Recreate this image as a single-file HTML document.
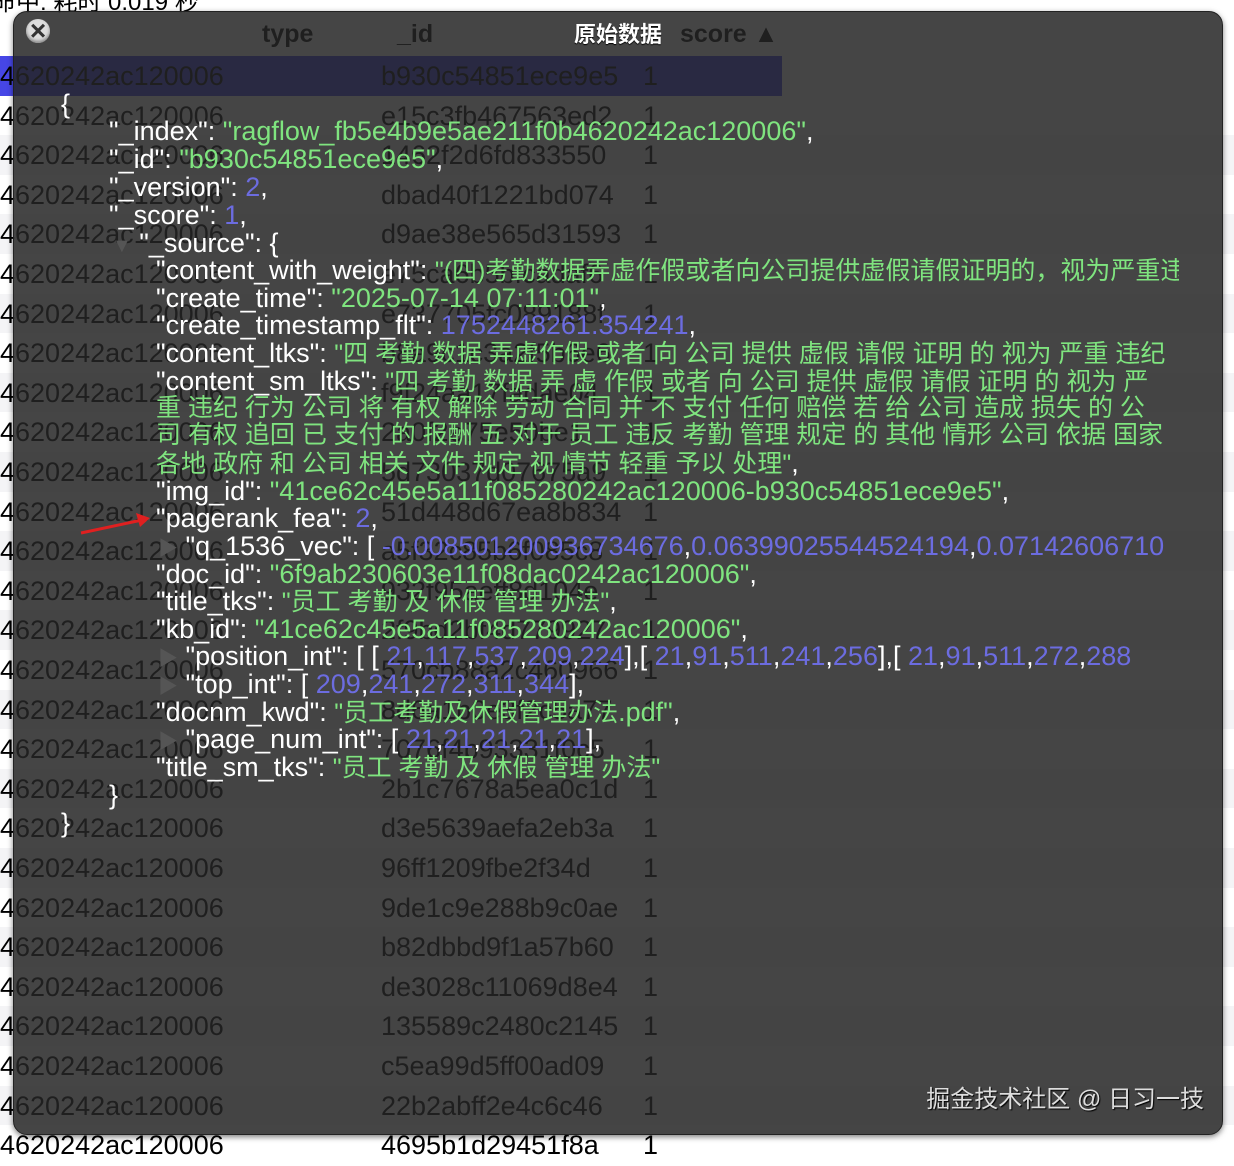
<!DOCTYPE html>
<html><head><meta charset="utf-8">
<style>
html,body{margin:0;padding:0;width:1234px;height:1142px;overflow:hidden;background:#fff;font-family:"Liberation Sans","Noto Sans CJK SC",sans-serif;}
.tb{position:absolute;left:0;top:0;width:1234px;height:1142px;}
.row{position:absolute;left:0;width:1234px;height:39.6px;font-size:27px;line-height:41px;color:#000;}
.row:nth-child(even){background:#f4f4f6}
.row span{position:absolute;top:0;white-space:nowrap}
.sel{background:#4646e6 !important}
.hdr{position:absolute;top:20px;font-size:25px;font-weight:bold;color:#000}
.ov{position:absolute;left:13px;top:11px;width:1208px;height:1122px;border-radius:14px;background:rgba(36,36,36,0.85);box-shadow:0 2px 6px rgba(0,0,0,.5);border:1px solid #222;overflow:hidden}
.title{position:absolute;left:0;width:100%;top:5px;text-align:center;color:#fff;font-weight:bold;font-size:22px;text-shadow:0 1px 1px #000}
.close{position:absolute;left:12px;top:7px;width:24px;height:24px;border-radius:50%;background:#ddd;box-shadow:inset 0 -2px 3px #888}
.close:before{content:"×";position:absolute;left:0;width:24px;top:-4px;text-align:center;font-size:28px;font-weight:bold;color:#333}
.j{position:absolute;white-space:nowrap;font-size:27px;line-height:28px;color:#fff;}
.c{font-size:25px}
.g{color:#7fe47f}.n{color:#6c6ce0}
.tri{color:#555;font-size:20px}
.clip{position:absolute;left:0;top:0;width:1165px;height:1122px;overflow:hidden}
.wm{position:absolute;right:18px;bottom:20px;color:#ddd;font-size:24px;text-shadow:1px 1px 1px #000}
</style></head><body>
<div style="position:absolute;left:-8px;top:-18px;font-size:24px;color:#000">命中: 耗时 0.019 秒</div>
<div class="tb">
<div class="hdr" style="left:262px">type</div>
<div class="hdr" style="left:397px">_id</div>
<div class="hdr" style="left:680px">score ▲</div>
<div class="row sel" style="top:56px;width:782px"><span style="left:0">4620242ac120006</span><span style="left:381px">b930c54851ece9e5</span><span style="left:643px">1</span></div>
<div class="row" style="top:95.6px"><span style="left:0">4620242ac120006</span><span style="left:381px">e15c3fb467563ed2</span><span style="left:643px">1</span></div>
<div class="row" style="top:135.2px"><span style="left:0">4620242ac120006</span><span style="left:381px">1462f2d6fd833550</span><span style="left:643px">1</span></div>
<div class="row" style="top:174.8px"><span style="left:0">4620242ac120006</span><span style="left:381px">dbad40f1221bd074</span><span style="left:643px">1</span></div>
<div class="row" style="top:214.4px"><span style="left:0">4620242ac120006</span><span style="left:381px">d9ae38e565d31593</span><span style="left:643px">1</span></div>
<div class="row" style="top:254px"><span style="left:0">4620242ac120006</span><span style="left:381px">e75ca6b5bfcadaf6</span><span style="left:643px">1</span></div>
<div class="row" style="top:293.6px"><span style="left:0">4620242ac120006</span><span style="left:381px">e737705fc089188f</span><span style="left:643px">1</span></div>
<div class="row" style="top:333.2px"><span style="left:0">4620242ac120006</span><span style="left:381px">b8a9c1c3a2f5b6e6</span><span style="left:643px">1</span></div>
<div class="row" style="top:372.8px"><span style="left:0">4620242ac120006</span><span style="left:381px">f9f24aa17fadae04</span><span style="left:643px">1</span></div>
<div class="row" style="top:412.4px"><span style="left:0">4620242ac120006</span><span style="left:381px">2a0f2e75e50be1</span><span style="left:643px">1</span></div>
<div class="row" style="top:452px"><span style="left:0">4620242ac120006</span><span style="left:381px">5d73037d07675a9</span><span style="left:643px">1</span></div>
<div class="row" style="top:491.6px"><span style="left:0">4620242ac120006</span><span style="left:381px">51d448d67ea8b834</span><span style="left:643px">1</span></div>
<div class="row" style="top:531.2px"><span style="left:0">4620242ac120006</span><span style="left:381px">a5f32c85b6f085c8</span><span style="left:643px">1</span></div>
<div class="row" style="top:570.8px"><span style="left:0">4620242ac120006</span><span style="left:381px">932f95aeff8d104e</span><span style="left:643px">1</span></div>
<div class="row" style="top:610.4px"><span style="left:0">4620242ac120006</span><span style="left:381px">2f9bd2bf4d779927</span><span style="left:643px">1</span></div>
<div class="row" style="top:650px"><span style="left:0">4620242ac120006</span><span style="left:381px">570cb88a2c460966</span><span style="left:643px">1</span></div>
<div class="row" style="top:689.6px"><span style="left:0">4620242ac120006</span><span style="left:381px">8d6a1b0e3f2c5a77</span><span style="left:643px">1</span></div>
<div class="row" style="top:729.2px"><span style="left:0">4620242ac120006</span><span style="left:381px">7076f4b93331f0c5</span><span style="left:643px">1</span></div>
<div class="row" style="top:768.8px"><span style="left:0">4620242ac120006</span><span style="left:381px">2b1c7678a5ea0c1d</span><span style="left:643px">1</span></div>
<div class="row" style="top:808.4px"><span style="left:0">4620242ac120006</span><span style="left:381px">d3e5639aefa2eb3a</span><span style="left:643px">1</span></div>
<div class="row" style="top:848px"><span style="left:0">4620242ac120006</span><span style="left:381px">96ff1209fbe2f34d</span><span style="left:643px">1</span></div>
<div class="row" style="top:887.6px"><span style="left:0">4620242ac120006</span><span style="left:381px">9de1c9e288b9c0ae</span><span style="left:643px">1</span></div>
<div class="row" style="top:927.2px"><span style="left:0">4620242ac120006</span><span style="left:381px">b82dbbd9f1a57b60</span><span style="left:643px">1</span></div>
<div class="row" style="top:966.8px"><span style="left:0">4620242ac120006</span><span style="left:381px">de3028c11069d8e4</span><span style="left:643px">1</span></div>
<div class="row" style="top:1006.4px"><span style="left:0">4620242ac120006</span><span style="left:381px">135589c2480c2145</span><span style="left:643px">1</span></div>
<div class="row" style="top:1046px"><span style="left:0">4620242ac120006</span><span style="left:381px">c5ea99d5ff00ad09</span><span style="left:643px">1</span></div>
<div class="row" style="top:1085.6px"><span style="left:0">4620242ac120006</span><span style="left:381px">22b2abff2e4c6c46</span><span style="left:643px">1</span></div>
<div class="row" style="top:1125.2px"><span style="left:0">4620242ac120006</span><span style="left:381px">4695b1d29451f8a</span><span style="left:643px">1</span></div>
</div>

<div class="ov">
<div class="close"></div>
<div class="title">原始数据</div>
<div class="clip">
<div class="j" style="left:47px;top:78px">{</div>
<div class="j" style="left:95px;top:105px">"_index": <span class="g">"ragflow_fb5e4b9e5ae211f0b4620242ac120006"</span>,</div>
<div class="j" style="left:95px;top:133px">"_id": <span class="g">"b930c54851ece9e5"</span>,</div>
<div class="j" style="left:95px;top:161px">"_version": <span class="n">2</span>,</div>
<div class="j" style="left:95px;top:189px">"_score": <span class="n">1</span>,</div>
<div class="j" style="left:98px;top:217px"><span class="tri">▼</span> "_source": {</div>
<div class="j" style="left:142px;top:244px">"content_with_weight": <span class="g c">"(四)考勤数据弄虚作假或者向公司提供虚假请假证明的，视为严重违纪行为</span></div>
<div class="j" style="left:142px;top:272px">"create_time": <span class="g">"2025-07-14 07:11:01"</span>,</div>
<div class="j" style="left:142px;top:299px">"create_timestamp_flt": <span class="n">1752448261.354241</span>,</div>
<div class="j" style="left:142px;top:327px">"content_ltks": <span class="g c">"四 考勤 数据 弄虚作假 或者 向 公司 提供 虚假 请假 证明 的 视为 严重 违纪</span></div>
<div class="j" style="left:142px;top:355px">"content_sm_ltks": <span class="g c">"四 考勤 数据 弄 虚 作假 或者 向 公司 提供 虚假 请假 证明 的 视为 严</span></div>
<div class="j g c" style="left:142px;top:382px">重 违纪 行为 公司 将 有权 解除 劳动 合同 并 不 支付 任何 赔偿 若 给 公司 造成 损失 的 公</div>
<div class="j g c" style="left:142px;top:409px">司 有权 追回 已 支付 的 报酬 五 对于 员工 违反 考勤 管理 规定 的 其他 情形 公司 依据 国家</div>
<div class="j" style="left:142px;top:437px"><span class="g c">各地 政府 和 公司 相关 文件 规定 视 情节 轻重 予以 处理"</span>,</div>
<div class="j" style="left:142px;top:465px">"img_id": <span class="g">"41ce62c45e5a11f085280242ac120006-b930c54851ece9e5"</span>,</div>
<div class="j" style="left:142px;top:492px">"pagerank_fea": <span class="n">2</span>,</div>
<div class="j" style="left:144px;top:520px"><span class="tri">▶</span> "q_1536_vec": [ <span class="n">-0.008501200936734676</span>,<span class="n">0.06399025544524194</span>,<span class="n">0.07142606710</span></div>
<div class="j" style="left:142px;top:548px">"doc_id": <span class="g">"6f9ab230603e11f08dac0242ac120006"</span>,</div>
<div class="j" style="left:142px;top:575px">"title_tks": <span class="g c">"员工 考勤 及 休假 管理 办法"</span>,</div>
<div class="j" style="left:142px;top:603px">"kb_id": <span class="g">"41ce62c45e5a11f085280242ac120006"</span>,</div>
<div class="j" style="left:144px;top:630px"><span class="tri">▶</span> "position_int": [ [ <span class="n">21</span>,<span class="n">117</span>,<span class="n">537</span>,<span class="n">209</span>,<span class="n">224</span>],[ <span class="n">21</span>,<span class="n">91</span>,<span class="n">511</span>,<span class="n">241</span>,<span class="n">256</span>],[ <span class="n">21</span>,<span class="n">91</span>,<span class="n">511</span>,<span class="n">272</span>,<span class="n">288</span></div>
<div class="j" style="left:144px;top:658px"><span class="tri">▶</span> "top_int": [ <span class="n">209</span>,<span class="n">241</span>,<span class="n">272</span>,<span class="n">311</span>,<span class="n">344</span>],</div>
<div class="j" style="left:142px;top:686px">"docnm_kwd": <span class="g"><span class="c">"员工考勤及休假管理办法</span>.pdf"</span>,</div>
<div class="j" style="left:144px;top:713px"><span class="tri">▶</span> "page_num_int": [ <span class="n">21</span>,<span class="n">21</span>,<span class="n">21</span>,<span class="n">21</span>,<span class="n">21</span>],</div>
<div class="j" style="left:142px;top:741px">"title_sm_tks": <span class="g c">"员工 考勤 及 休假 管理 办法"</span></div>
<div class="j" style="left:95px;top:769px">}</div>
<div class="j" style="left:47px;top:797px">}</div>
</div>
<svg style="position:absolute;left:64px;top:496px" width="82" height="30"><line x1="3" y1="25" x2="64" y2="12" stroke="#e02020" stroke-width="3"/><polygon points="72,10 58,5 62,19" fill="#e02020"/></svg>
<div class="wm">掘金技术社区 @ 日习一技</div>
</div>
</body></html>
